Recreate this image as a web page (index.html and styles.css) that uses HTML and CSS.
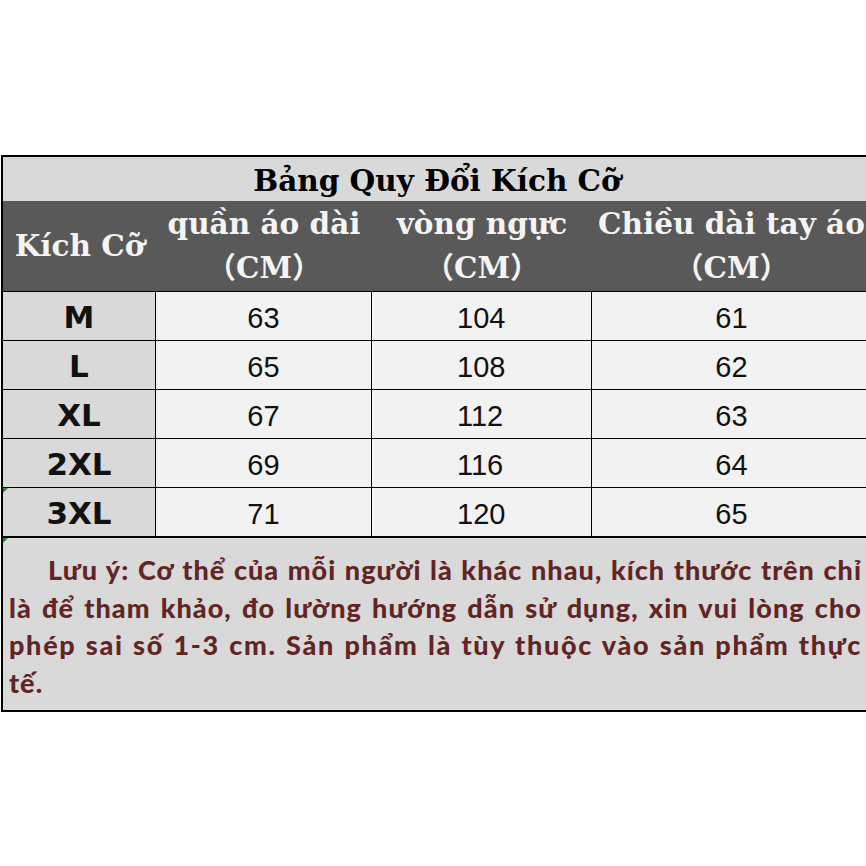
FILE: index.html
```html
<!DOCTYPE html>
<html lang="vi">
<head>
<meta charset="utf-8">
<title>Bảng Quy Đổi Kích Cỡ</title>
<link rel="stylesheet" href="styles.css">
</head>
<body>
<div class="page">
  <div class="sheet">
    <div class="title">Bảng Quy Đổi Kích Cỡ</div>
    <div class="head">
      <div class="hcell">Kích Cỡ</div>
      <div class="hcell"><span>quần áo dài</span><span>（CM）</span></div>
      <div class="hcell"><span>vòng ngực</span><span>（CM）</span></div>
      <div class="hcell"><span>Chiều dài tay áo</span><span>（CM）</span></div>
    </div>
    <div class="rows">
      <div class="size">M</div><div class="num">63</div><div class="num left">104</div><div class="num">61</div>
      <div class="size">L</div><div class="num">65</div><div class="num left">108</div><div class="num">62</div>
      <div class="size">XL</div><div class="num">67</div><div class="num left">112</div><div class="num">63</div>
      <div class="size">2XL</div><div class="num">69</div><div class="num left">116</div><div class="num">64</div>
      <div class="size mark">3XL</div><div class="num">71</div><div class="num left">120</div><div class="num">65</div>
    </div>
    <div class="note mark">
      <span class="line full first">Lưu ý: Cơ thể của mỗi người là khác nhau, kích thước trên chỉ</span>
      <span class="line full">là để tham khảo, đo lường hướng dẫn sử dụng, xin vui lòng cho</span>
      <span class="line full wide">phép sai số 1-3 cm. Sản phẩm là tùy thuộc vào sản phẩm thực</span>
      <span class="line">tế.</span>
    </div>
  </div>
</div>
</body>
</html>
```
FILE: styles.css
```css
html, body {
  margin: 0;
  padding: 0;
  background: #ffffff;
  overflow: hidden;
}
.page {
  width: 866px;
  height: 866px;
  overflow: hidden;
  padding-top: 155px;
  padding-left: 1px;
  box-sizing: border-box;
}
.sheet {
  width: 870px;
  border: 2px solid #000;
  border-right: none;
  box-sizing: border-box;
}
.title {
  height: 44px;
  background: #d9d9d9;
  color: #000;
  font-family: "DejaVu Serif", "Liberation Serif", serif;
  font-weight: bold;
  font-size: 29.5px;
  line-height: 47px;
  text-align: center;
  white-space: nowrap;
}
.head {
  display: grid;
  grid-template-columns: 153px 216px 220px 279px;
  height: 90px;
  background: #595959;
  color: #f4f4f4;
  font-family: "DejaVu Serif", "Liberation Serif", "Noto Sans CJK SC", serif;
  font-weight: bold;
  font-size: 29.5px;
}
.hcell {
  display: flex;
  flex-direction: column;
  align-items: center;
  justify-content: center;
  line-height: 44px;
  white-space: nowrap;
}
.rows {
  display: grid;
  grid-template-columns: 152px 215px 219px 279px;
  grid-auto-rows: 48px;
  gap: 1px;
  background: #000;
  border-top: 1px solid #000;
  border-bottom: 2px solid #000;
}
.size {
  background: #d9d9d9;
  color: #111;
  font-family: "DejaVu Sans", sans-serif;
  font-weight: bold;
  font-size: 31px;
  line-height: 50px;
  text-align: center;
  position: relative;
}
.num {
  background: #f2f2f2;
  color: #111;
  font-family: "Liberation Sans", Arial, sans-serif;
  font-size: 29px;
  line-height: 53px;
  text-align: center;
}
.num.left {
  text-align: left;
  padding-left: 85px;
}
.mark::before {
  content: "";
  position: absolute;
  left: 0;
  top: 0;
  border-top: 5px solid #1f8f2a;
  border-right: 5px solid transparent;
}
.note {
  position: relative;
  height: 172px;
  background: #d9d9d9;
  color: #632523;
  font-family: Lato, "Open Sans", sans-serif;
  font-weight: 900;
  font-size: 27px;
  letter-spacing: 1.05px;
  line-height: 37.5px;
  padding: 13px 0 0 6px;
  box-sizing: border-box;
  white-space: nowrap;
}
.line {
  display: block;
}
.line.full {
  width: 853px;
  box-sizing: border-box;
  white-space: normal;
  text-align: justify;
  text-align-last: justify;
}
.line.wide {
  letter-spacing: 1.7px;
}
.line.first {
  padding-left: 39px;
}
```
